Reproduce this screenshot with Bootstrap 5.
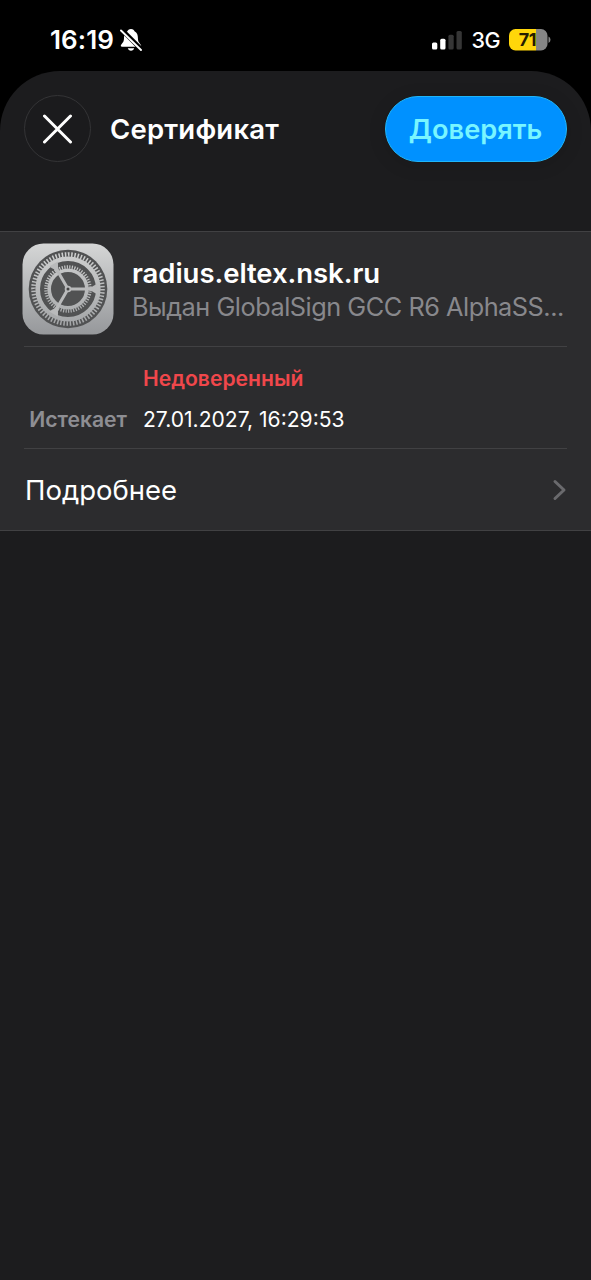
<!DOCTYPE html>
<html lang="ru">
<head>
<meta charset="utf-8">
<meta name="viewport" content="width=device-width, initial-scale=1">
<title>Сертификат</title>
<link href="https://cdn.jsdelivr.net/npm/bootstrap@5.3.0/dist/css/bootstrap.min.css" rel="stylesheet">
<style>
body{background:#000;color:#fff;font-family:Inter,"Liberation Sans",sans-serif;min-height:1280px}
svg{display:block;flex-shrink:0}
.status{height:71px;padding:8px 40px 0 50px}
.clock{font-size:26px;font-weight:600;line-height:32px;letter-spacing:.1px}
.carrier{font-size:21.5px;font-weight:500;line-height:32px;letter-spacing:-.5px}
.sheet{background:#1c1c1e;border-radius:60px 60px 0 0;height:1209px;padding-top:25px}
.topbar{height:66px;padding:0 24px}
.close-btn{width:67px;height:67px;margin-top:-1px;border:1.5px solid #343436;background:#1b1b1d}
.heading{font-size:27.5px;font-weight:600;line-height:36px;letter-spacing:.2px;margin-left:19px}
.trust{width:182px;height:66px;border-radius:33px;background:#0091ff;border:1.5px solid #20b5f8;color:#78f5ff;font-size:27.2px;font-weight:600;line-height:36px;padding:2px 1px 0 0;box-shadow:0 3px 18px #0002}
.panel{background:#2c2c2e;border-top:1.5px solid #414143;border-bottom:1.5px solid #414143;margin-top:69px;height:300px;padding:0 24px}
.host{font-size:27.5px;font-weight:600;line-height:34px;padding-top:1px;letter-spacing:-.05px}
.issuer{font-size:25.3px;line-height:34px;color:#88888c;letter-spacing:-.48px}
.identity{height:115px;border-bottom:1.5px solid #414143}
.facts{height:102px;border-bottom:1.5px solid #414143;font-size:21.1px;padding-top:3px}
.fact{height:41px;line-height:41px}
.label-cell{width:103px;margin-right:16px;color:#8e8e93;font-weight:600}
.bad{color:#f0474b;font-weight:600}
.more{height:81px;font-size:27.5px}
.more span{padding:2px 0 0 1px}
</style>
</head>
<body>
<header class="status d-flex align-items-center">
  <span class="clock">16:19</span>
  <svg width="22" height="24" viewBox="0 0 22 24" style="margin-left:6px"><path fill="#fff" d="M11 1C8.800 1 7.800 2.300 7.400 3.200 4.600 4.400 4 7 4 10c0 4-1.500 4.800-3 7-.6 1 .1 1.700 1 1.700h18c1 0 1.500-.8.9-1.700-1.400-2.200-3-3-3-7 0-3-.7-5.600-3.400-6.800C14.100 2.300 13.200 1 11 1zM7.800 20.200h6.400c-.4 1.600-1.600 2.500-3.200 2.500s-2.800-.9-3.200-2.500z"/><path d="M1.500 1.500L22 22" stroke="#000" stroke-width="4.600"/><path d="M1 2.500L21 22" stroke="#fff" stroke-width="1.900" stroke-linecap="round"/></svg>
  <svg class="ms-auto" width="30" height="20" viewBox="0 0 30 20"><rect y="12.500" width="5.300" height="7" rx="1.500" fill="#fff"/><rect x="8.200" y="8.800" width="5.300" height="10.700" rx="1.500" fill="#fff"/><rect x="16.400" y="4.700" width="5.300" height="14.800" rx="1.500" fill="#363636"/><rect x="24.500" y="1" width="5.300" height="18.500" rx="1.500" fill="#363636"/></svg>
  <span class="carrier" style="margin-left:9px">3G</span>
  <svg style="margin-left:9px" width="42" height="22" viewBox="0 0 42 22"><defs><clipPath id="cell"><rect x="0" width="38.500" height="21.500" rx="6.500"/></clipPath></defs><g clip-path="url(#cell)"><path fill="#ffd60a" d="M0 0h27v22H0z"/><path fill="#858585" d="M27 0H40v22H27z"/></g><path d="M39.500 7.500q2 1 2 3.300t-2 3.300z" fill="#858585"/><text x="18.500" y="17.300" text-anchor="middle" font-size="18" font-weight="700" fill="#251c00" letter-spacing="-.3">71</text></svg>
</header>
<main class="sheet">
  <div class="topbar d-flex align-items-center">
    <button class="close-btn rounded-circle d-flex align-items-center justify-content-center p-0" aria-label="Закрыть"><svg width="30" height="30" viewBox="0 0 30 30" stroke="#fff" stroke-width="3" stroke-linecap="round"><path d="M1.500 2L27.500 28M27.500 2L1.500 28"/></svg></button>
    <h1 class="heading mb-0">Сертификат</h1>
    <button class="trust ms-auto">Доверять</button>
  </div>
  <section class="panel">
    <div class="identity d-flex align-items-center">
      <svg style="margin-left:-2px" width="92" height="92" viewBox="0 0 92 92">
        <defs><linearGradient id="metal" x1="0" y1="0" x2="0" y2="1"><stop stop-color="#d5d6d6"/><stop offset="1" stop-color="#96989b"/></linearGradient><linearGradient id="ring" gradientUnits="userSpaceOnUse" x1="0" y1="8" x2="0" y2="84"><stop stop-color="#cfd0d0"/><stop offset="1" stop-color="#a3a5a7"/></linearGradient></defs>
        <rect x=".5" y=".5" width="91" height="91" rx="21" fill="url(#metal)"/>
        <circle cx="46" cy="46" r="39.300" fill="#515253"/>
        <g fill="none" stroke="url(#ring)">
          <circle cx="46" cy="46" r="34.500" stroke-width="4.600" pathLength="136" stroke-dasharray=".95 1.05"/>
          <circle cx="46" cy="46" r="30.300" stroke-width="4.600"/>
          <circle cx="46" cy="46" r="22" stroke-width="3.500" pathLength="108" stroke-dasharray=".95 1.050"/>
          <circle cx="46" cy="46" r="18.800" stroke-width="3.600"/>
        </g>
        <g fill="#b9babb"><path id="arm" d="M46 44.500H66L70 43.700 72 42.500 75 41V51L72 49.500 70 48.300 66 47.500H46z"/><use href="#arm" transform="rotate(120 46 46)"/><use href="#arm" transform="rotate(240 46 46)"/></g>
        <circle cx="46" cy="46" r="3.300" fill="#b9babb"/><circle cx="46" cy="46" r="1.500" fill="#444"/>
      </svg>
      <div class="text-nowrap" style="margin-left:18px"><div class="host">radius.eltex.nsk.ru</div><div class="issuer">Выдан GlobalSign GCC R6 AlphaSS...</div></div>
    </div>
    <div class="facts d-flex flex-column justify-content-center">
      <div class="fact d-flex"><span class="label-cell"></span><span class="bad">Недоверенный</span></div>
      <div class="fact d-flex"><span class="label-cell text-end">Истекает</span><span class="stamp">27.01.2027, 16:29:53</span></div>
    </div>
    <div class="more d-flex align-items-center justify-content-between"><span>Подробнее</span><svg width="15" height="24" viewBox="0 0 15 24" fill="none" stroke="#6a6a6d" stroke-width="3" stroke-linecap="round" stroke-linejoin="round"><path d="M3 3.500L12 12 3 20.500"/></svg></div>
  </section>
</main>
<script src="https://cdn.jsdelivr.net/npm/bootstrap@5.3.0/dist/js/bootstrap.bundle.min.js"></script>
</body>
</html>
